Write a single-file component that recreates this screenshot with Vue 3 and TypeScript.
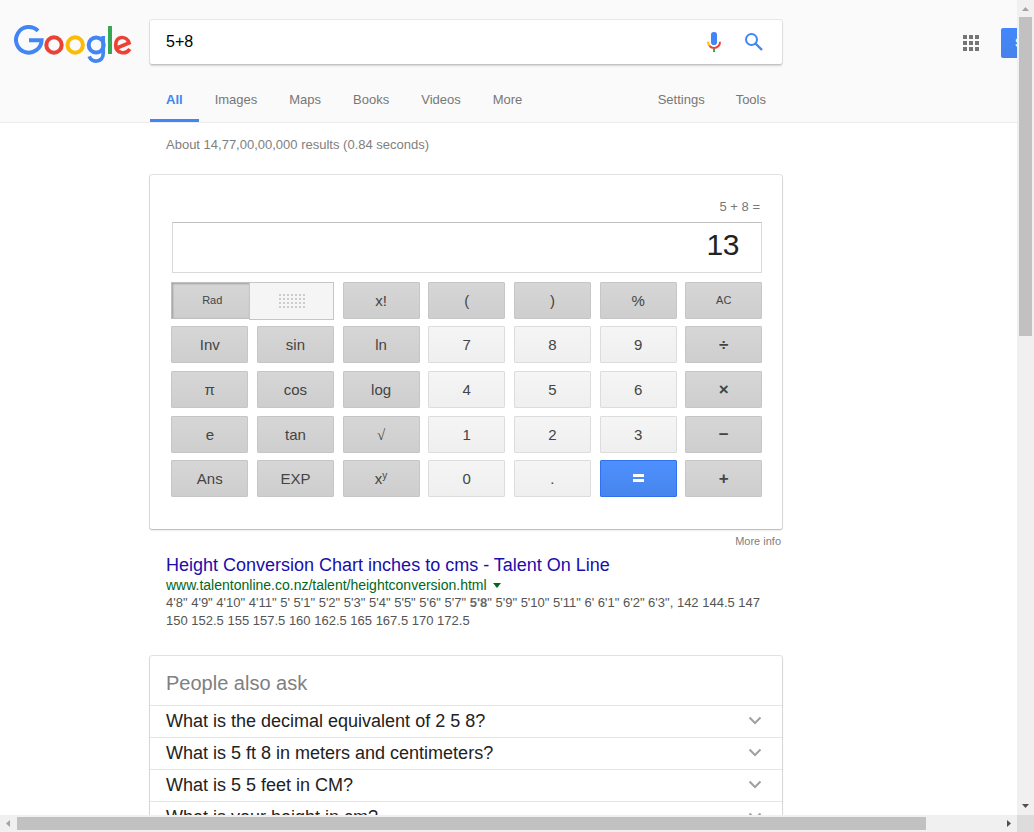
<script setup lang="ts">
import { ref } from 'vue'

interface Key {
  label: string
  kind: 'dark' | 'light' | 'small' | 'op' | 'equals' | 'root'
  sup?: string
}

const dark = (label: string, sup?: string): Key => ({ label, kind: 'dark', sup })
const light = (label: string): Key => ({ label, kind: 'light' })
const op = (label: string): Key => ({ label, kind: 'op' })

const keys: Key[] = [
  dark('x!'), dark('('), dark(')'), dark('%'), { label: 'AC', kind: 'small' },
  dark('Inv'), dark('sin'), dark('ln'), light('7'), light('8'), light('9'), op('÷'),
  dark('π'), dark('cos'), dark('log'), light('4'), light('5'), light('6'), op('×'),
  dark('e'), dark('tan'), { label: '√', kind: 'root' }, light('1'), light('2'), light('3'), op('−'),
  dark('Ans'), dark('EXP'), dark('x', 'y'), light('0'), light('.'),
  { label: '=', kind: 'equals' }, op('+'),
]

const query = ref('5+8')
const tabs = ['All', 'Images', 'Maps', 'Books', 'Videos', 'More']
const questions = [
  'What is the decimal equivalent of 2 5 8?',
  'What is 5 ft 8 in meters and centimeters?',
  'What is 5 5 feet in CM?',
  'What is your height in cm?',
]
</script>

<template>
  <div class="window">
    <div class="page">
      <header class="header">
        <div class="top">
          <svg class="logo" width="120" height="40" viewBox="13 24 120 40" fill="none" stroke-width="4">
            <path stroke="#4285f4" d="M38 30.900A12.800 12.800 0 1 0 41.600 40.200H29" />
            <circle stroke="#ea4335" cx="54" cy="45" r="7.700" />
            <circle stroke="#fbbc05" cx="75.200" cy="45" r="7.700" />
            <circle stroke="#4285f4" cx="96.200" cy="45" r="7.500" />
            <path stroke="#4285f4" stroke-width="3.700" d="M103.200 36V53.500C103.200 63 91.500 63 89.200 56.300" />
            <path stroke="#34a853" d="M110 26V54" />
            <path stroke="#ea4335" stroke-width="3.700" d="M116.300 48.300L129 43C126.800 35.200 115.700 35.500 115.700 45C115.700 53.800 126 55 129.800 48.900" />
          </svg>
          <div class="search">
            <span class="query">{{ query }}</span>
            <svg class="mic" width="16" height="22" viewBox="0 0 16 22" fill="none">
              <rect x="5" y="1" width="6" height="13" rx="2.800" fill="#4285f4" />
              <path d="M2 10.800C2 13 2.800 14.300 3.900 15.300" stroke="#fbbc05" stroke-width="2" />
              <path d="M3.500 15C6 17.600 10 17.600 12.500 15C13.500 14 14 12.500 14 10.800" stroke="#ea4335" stroke-width="2" />
              <path d="M8 17.800V21" stroke="#34a853" stroke-width="2" />
            </svg>
            <svg class="lens" width="20" height="20" viewBox="0 0 20 20" fill="none" stroke="#4285f4" stroke-width="2">
              <circle cx="7.500" cy="7.500" r="5.500" />
              <path d="M11.500 11.500L18 18" stroke-width="2.400" />
            </svg>
          </div>
          <svg class="apps" width="16" height="16" viewBox="0 0 16 16" fill="#757575">
            <template v-for="r in 3" :key="r">
              <rect v-for="c in 3" :key="c" :x="(c - 1) * 6" :y="(r - 1) * 6" width="4" height="4" />
            </template>
          </svg>
          <div class="signin">Sign in</div>
        </div>
        <nav class="nav">
          <span v-for="(t, i) in tabs" :key="t" class="tab" :class="{ active: i === 0 }">{{ t }}</span>
          <span class="tab settings">Settings</span>
          <span class="tab">Tools</span>
        </nav>
      </header>

      <main class="results">
        <div class="stats">About 14,77,00,00,000 results (0.84 seconds)</div>

        <section class="card calc">
          <div class="expression">5 + 8 =</div>
          <div class="display">13</div>
          <div class="keys">
            <div class="angle">
              <div class="rad">Rad</div>
              <div class="drag">
                <svg width="26" height="14" viewBox="0 0 26 14" fill="#ccc" shape-rendering="crispEdges">
                  <template v-for="r in 4" :key="r">
                    <rect v-for="c in 7" :key="c" :x="(c - 1) * 4" :y="(r - 1) * 4" width="2" height="2" />
                  </template>
                </svg>
              </div>
            </div>
            <div v-for="k in keys" :key="k.label" class="key" :class="k.kind">
              <svg v-if="k.kind === 'equals'" width="11" height="8" viewBox="0 0 11 8" fill="#fff" shape-rendering="crispEdges">
                <rect width="11" height="3" />
                <rect y="5" width="11" height="3" />
              </svg>
              <span v-else>{{ k.label }}<sup v-if="k.sup">{{ k.sup }}</sup></span>
            </div>
          </div>
        </section>
        <div class="more-info">More info</div>

        <article class="result">
          <h3>Height Conversion Chart inches to cms - Talent On Line</h3>
          <div class="url">www.talentonline.co.nz/talent/heightconversion.html<i class="caret"></i></div>
          <p>
            4'8" 4'9" 4'10" 4'11" 5' 5'1" 5'2" 5'3" 5'4" 5'5" 5'6" 5'7" <b>5'8</b>" 5'9" 5'10" 5'11" 6' 6'1" 6'2" 6'3", 142 144.5 147<br>
            150 152.5 155 157.5 160 162.5 165 167.5 170 172.5
          </p>
        </article>

        <section class="card ask">
          <h2>People also ask</h2>
          <div v-for="q in questions" :key="q" class="question">
            <span>{{ q }}</span>
            <svg width="14" height="9" viewBox="0 0 14 9" fill="none" stroke="#a0a0a0" stroke-width="2">
              <path d="M1.500 1.500L7 7L12.500 1.500" />
            </svg>
          </div>
        </section>
      </main>
    </div>

    <div class="vbar">
      <svg width="17" height="17" viewBox="0 0 17 17" fill="#a3a3a3"><path d="M5 11L8.500 7L12 11Z" /></svg>
      <div class="vthumb"></div>
      <svg class="end" width="17" height="17" viewBox="0 0 17 17" fill="#505050"><path d="M5 6L8.500 10L12 6Z" /></svg>
    </div>
    <div class="hbar">
      <svg width="17" height="17" viewBox="0 0 17 17" fill="#a3a3a3"><path d="M10 5L6 8.500L10 12Z" /></svg>
      <div class="hthumb"></div>
      <svg class="end" width="17" height="17" viewBox="0 0 17 17" fill="#505050"><path d="M7 5L11 8.500L7 12Z" /></svg>
    </div>
    <div class="corner"></div>
  </div>
</template>

<style>
body {
  margin: 0;
  overflow: hidden;
}
</style>

<style scoped>
.window {
  display: grid;
  grid-template: 815px 17px / 1017px 17px;
  width: 1034px;
  height: 832px;
  overflow: hidden;
  font-family: "Liberation Sans", Arial, sans-serif;
  font-size: 13px;
  color: #222;
  background: #fff;
}
.window * {
  box-sizing: border-box;
}
svg {
  display: block;
  flex: none;
}
.page {
  overflow: hidden;
}
.header {
  height: 123px;
  background: #fafafa;
  border-bottom: 1px solid #ebebeb;
}
.top {
  display: flex;
  align-items: flex-start;
  height: 77px;
  padding-left: 13px;
}
.logo {
  margin-top: 24px;
}
.search {
  display: flex;
  flex: none;
  width: 632px;
  height: 44px;
  margin: 20px 0 0 17px;
  padding-left: 16px;
  background: #fff;
  border-radius: 2px;
  box-shadow: 0 2px 2px 0 rgba(0, 0, 0, 0.16), 0 0 0 1px rgba(0, 0, 0, 0.08);
}
.query {
  flex: 1;
  font-size: 16px;
  line-height: 43px;
  color: #000;
}
.mic {
  margin: 11px 22px 0 0;
}
.lens {
  margin: 12px 18px 0 0;
}
.apps {
  margin: 35px 22px 0 181px;
}
.signin {
  flex: none;
  width: 70px;
  height: 30px;
  margin-top: 28px;
  padding-left: 14px;
  font-weight: bold;
  line-height: 29px;
  color: #fff;
  background: linear-gradient(#4387fd, #4683ea);
  border-radius: 2px;
}
.nav {
  display: flex;
  width: 632px;
  height: 45px;
  margin-left: 150px;
}
.tab {
  padding: 0 16px;
  line-height: 45px;
  color: #777;
}
.tab.active {
  font-weight: bold;
  color: #4285f4;
  border-bottom: 3px solid #4285f4;
}
.settings {
  margin-left: auto;
  padding-right: 15px;
}
.results {
  width: 632px;
  margin-left: 150px;
}
.stats {
  height: 52px;
  padding-left: 16px;
  line-height: 43px;
  color: #808080;
}
.card {
  background: #fff;
  border-radius: 2px;
  box-shadow: 0 0 0 1px rgba(0, 0, 0, 0.1), 0 1px 2px rgba(0, 0, 0, 0.22);
}
.calc {
  height: 354px;
  padding: 22px 20px 0 21px;
}
.expression {
  padding-right: 2px;
  line-height: 20px;
  height: 25px;
  text-align: right;
  color: #777;
}
.display {
  height: 51px;
  margin-left: 1px;
  padding-right: 22px;
  font-size: 30px;
  line-height: 44px;
  letter-spacing: -0.4px;
  text-align: right;
  border: 1px solid #d9d9d9;
  border-top-color: #c0c0c0;
}
.keys {
  display: grid;
  grid-template-columns: repeat(7, 77px);
  grid-auto-rows: 37px;
  gap: 7.6px 8.66px;
  margin: 8.75px 0 0 0.3px;
}
.angle {
  display: flex;
  grid-column: span 2;
}
.rad {
  width: 79px;
  font-size: 11px;
  line-height: 35px;
  text-align: center;
  color: #444;
  padding-left: 3px;
  background: linear-gradient(#d6d6d6, #cecece);
  border: 1px solid #c0c0c0;
  box-shadow: inset 1px 1px 2px rgba(0, 0, 0, 0.25);
}
.drag {
  display: flex;
  justify-content: center;
  width: 85px;
  height: 38px;
  margin-left: -1px;
  padding: 11px 0 0 1px;
  background: #f5f5f5;
  border: 1px solid #c6c6c6;
}
.key {
  display: flex;
  justify-content: center;
  font-size: 15px;
  line-height: 36px;
  color: #444;
  border: 1px solid #c6c6c6;
  border-radius: 1px;
  background: linear-gradient(#d6d6d6, #cecece);
}
.light {
  border-color: #dcdcdc;
  background: linear-gradient(#f5f5f5, #efefef);
}
.small {
  font-size: 11px;
  line-height: 35px;
}
.op {
  font-size: 17px;
  font-weight: bold;
  line-height: 35px;
}
.root {
  font-family: "Liberation Serif", serif;
}
.equals {
  padding-top: 13px;
  border-color: #2f72ed;
  background: linear-gradient(#4d90fe, #4785ec);
}
sup {
  font-size: 10px;
  line-height: 0;
  vertical-align: 5px;
}
.more-info {
  height: 25px;
  padding-right: 1px;
  font-size: 11px;
  line-height: 24px;
  text-align: right;
  color: #808080;
}
.result {
  height: 102px;
  padding-left: 16px;
}
h3 {
  margin: 0;
  font-size: 18px;
  font-weight: normal;
  line-height: 22px;
  color: #1a0dab;
}
.url {
  display: flex;
  align-items: center;
  height: 18px;
  padding-top: 1px;
  font-size: 14px;
  line-height: 17px;
  color: #006621;
}
.caret {
  margin-left: 6px;
  border: 4.5px solid transparent;
  border-top: 5px solid #006621;
  border-bottom: 0;
}
p {
  margin: 0;
  line-height: 18px;
  white-space: nowrap;
  color: #545454;
}
b {
  color: #6a6a6a;
}
h2 {
  height: 49px;
  margin: 0;
  padding-left: 16px;
  font-size: 20px;
  font-weight: normal;
  line-height: 55px;
  color: #808080;
}
.question {
  display: flex;
  justify-content: space-between;
  align-items: flex-start;
  height: 32px;
  padding: 0 20px 0 16px;
  font-size: 18px;
  line-height: 30px;
  border-top: 1px solid #e5e5e5;
}
.question svg {
  margin-top: 10px;
}
.vbar {
  display: flex;
  flex-direction: column;
  align-items: center;
  background: #f0f0f0;
}
.vthumb {
  width: 13px;
  height: 319px;
  background: #c1c1c1;
}
.vbar .end {
  margin-top: auto;
}
.hbar {
  display: flex;
  align-items: center;
  background: #f0f0f0;
}
.hthumb {
  width: 909px;
  height: 13px;
  background: #c1c1c1;
}
.hbar .end {
  margin-left: auto;
}
.corner {
  background: #dcdcdc;
}
</style>
